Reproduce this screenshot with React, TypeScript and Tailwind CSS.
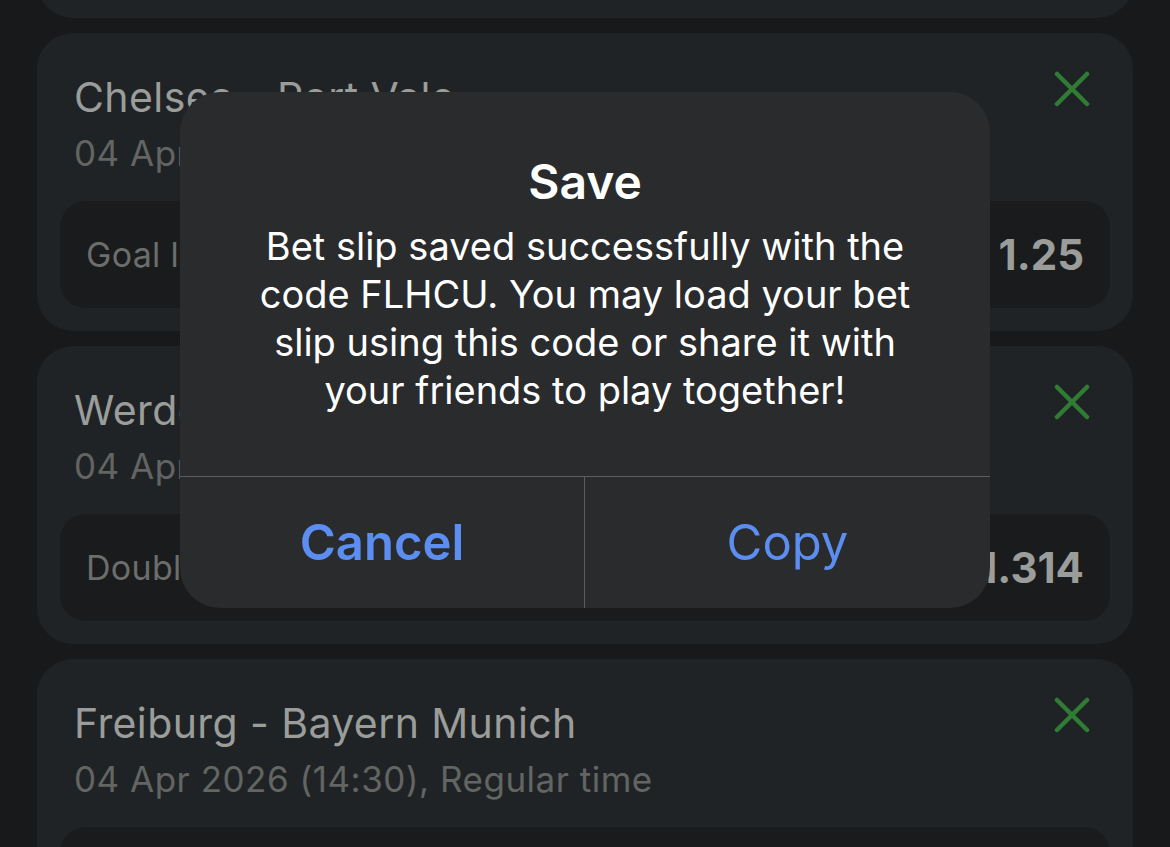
import React from "react";

interface Bet {
  title: string;
  date: string;
  market: string;
  odds: string;
}

const bets: Bet[] = [
  { title: "Arsenal - Everton", date: "04 Apr 2026 (12:00), Regular time", market: "Total goals", odds: "1.50" },
  { title: "Chelsea - Port Vale", date: "04 Apr 2026 (13:30), Regular time", market: "Goal line", odds: "1.25" },
  { title: "Werder Bremen - Mainz", date: "04 Apr 2026 (14:30), Regular time", market: "Double chance", odds: "1.314" },
  { title: "Freiburg - Bayern Munich", date: "04 Apr 2026 (14:30), Regular time", market: "Both teams to score", odds: "1.40" },
];

function CloseIcon() {
  return (
    <svg width="36" height="36" viewBox="0 0 36 36" fill="none">
      <path d="M3 3L33 33M33 3L3 33" stroke="#2f7c35" strokeWidth="4.5" strokeLinecap="round" />
    </svg>
  );
}

function BetCard({ bet }: { bet: Bet }) {
  return (
    <div className="h-[298px] shrink-0 rounded-[36px] bg-[#202326] px-[23px] pt-[40px] pb-[23px] flex flex-col">
      <div className="flex items-start justify-between pl-[14px] pr-[20px]">
        <div className="flex flex-col">
          <span className="text-[41px] leading-[48px] text-[#9a9d99] tracking-[0.4px]">{bet.title}</span>
          <span className="mt-[12px] text-[35px] leading-[40px] text-[#626562] tracking-[0.5px]">{bet.date}</span>
        </div>
        <div className="-mt-[2px]">
          <CloseIcon />
        </div>
      </div>
      <div className="mt-auto h-[107px] rounded-[26px] bg-[#191b1d] flex items-center justify-between px-[26px]">
        <span className="text-[34px] text-[#6b6e6b] tracking-[0.3px]">{bet.market}</span>
        <span className="text-[42px] font-bold text-[#9a9d99]">{bet.odds}</span>
      </div>
    </div>
  );
}

export default function App() {
  return (
    <div
      className="relative w-[1170px] h-[847px] overflow-hidden bg-[#17191b]"
      style={{ fontFamily: "Inter, 'Noto Sans', sans-serif" }}
    >
      <div className="flex flex-col gap-[15px] px-[37px] -mt-[280px]">
        {bets.map((bet, index) => (
          <BetCard bet={bet} key={index} />
        ))}
      </div>

      <div className="absolute left-[180px] top-[92px] w-[810px] h-[516px] rounded-[40px] bg-[#2a2b2d] flex flex-col overflow-hidden">
        <div className="flex-1 flex flex-col items-center pt-[62px] px-[30px]">
          <span className="text-[48px] leading-[56px] font-semibold text-white">Save</span>
          <p className="mt-[12px] text-[38px] leading-[48px] text-center text-white">
            Bet slip saved successfully with the
            <br />
            code FLHCU. You may load your bet
            <br />
            slip using this code or share it with
            <br />
            your friends to play together!
          </p>
        </div>
        <div className="h-[132px] border-t border-[#5c5d5f] grid grid-cols-2">
          <button className="flex items-center justify-center border-r border-[#5c5d5f] text-[49px] font-semibold text-[#5b8ef0]">
            Cancel
          </button>
          <button className="flex items-center justify-center text-[49px] text-[#5b8ef0]">Copy</button>
        </div>
      </div>
    </div>
  );
}
